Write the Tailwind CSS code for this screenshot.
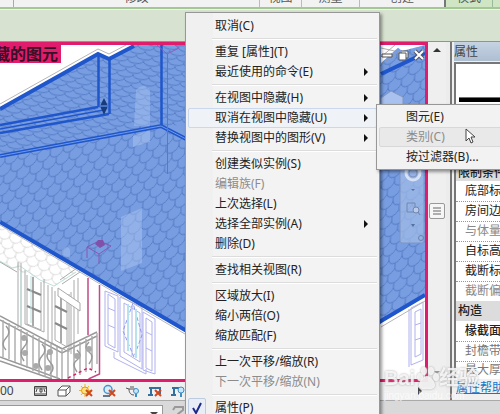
<!DOCTYPE html>
<html lang="zh-CN">
<head>
  <meta charset="UTF-8" />
  <meta name="viewport" content="width=device-width, initial-scale=1.0" />
  <title>修改 - 属性</title>
  <script src="https://cdn.jsdelivr.net/npm/@tailwindcss/browser@4"></script>
</head>
<body class="relative flex h-screen flex-col overflow-hidden bg-[#ececec] font-['Noto_Sans','Noto_Sans_CJK_SC',sans-serif] text-xs text-[#222]">

  <!-- Ribbon -->
  <header class="shrink-0">
    <div class="flex h-[7px] items-end overflow-hidden bg-[#f1f2f1] leading-[14px] text-[#555]">
      <span class="h-4 w-[14px] border-r border-[#aaa]"></span>
      <span class="h-4 flex-1 border-r border-[#bbb] text-center">修改</span>
      <span class="h-4 w-[42px] border-r border-[#bbb] text-center">视图</span>
      <span class="h-4 w-[58px] border-r border-[#bbb] text-center">测量</span>
      <span class="h-4 w-[86px] border-r-2 border-[#777] text-center">创建</span>
      <span class="h-4 w-[47px] border-r border-[#9b9] bg-[#cfe5c4] text-center">模式</span>
      <span class="h-4 w-[7px] bg-[#cfe5c4]"></span>
    </div>
    <div class="h-[35px] border-t-2 border-b border-t-[#a3c795] border-b-[#8d968b] bg-[#d8e2d1]">
      <div class="h-px bg-[#eef3ea]"></div>
    </div>
  </header>

  <div class="flex min-h-0 flex-1">
    <!-- Drawing area -->
    <main class="flex min-w-0 flex-1 flex-col">
      <div class="relative min-h-0 flex-1 overflow-hidden border-t-[3px] border-r-[3px] border-b-[3px] border-[#e01c6c] bg-white">
        <svg class="block h-full w-full" viewBox="0 45 425 334" preserveAspectRatio="xMinYMin slice" fill="none">
          <defs>
            <pattern id="tiles" width="14" height="18" patternUnits="userSpaceOnUse" patternTransform="translate(3 4) rotate(-20) skewX(-24)">
              <path d="M0 0v4c1 6 11 6 14 0V0M-7 9v4c1 6 11 6 14 0V9M7 13c1 6 11 6 14 0V9" stroke="#456cbb" stroke-width=".7" />
            </pattern>
            <pattern id="tilesFlat" width="16" height="10" patternUnits="userSpaceOnUse" patternTransform="rotate(10)">
              <path d="M0 0v1c2 4 13 4 16 0V0M-8 5v1c2 4 13 4 16 0V5M8 6c2 4 13 4 16 0V5" stroke="#456cbb" stroke-width=".7" />
            </pattern>
            <pattern id="tilesPale" width="12" height="16" patternUnits="userSpaceOnUse" patternTransform="rotate(20)">
              <path d="M0 0v3c1 6 11 6 12 0V0M-6 8v3c1 6 11 6 12 0V8M6 11c1 6 11 6 12 0V8" stroke="#ccc" stroke-width=".7" />
            </pattern>
          </defs>

          <!-- lower canopy -->
          <path d="M0 224L65 262 80 270 54 287 38 281 0 262z" fill="url(#tilesPale)" />
          <path d="M0 261L12 268 20 266 40 280 54 286 76 272" stroke="#bfe0da" />

          <!-- balcony windows -->
          <g stroke="#aaa">
            <path d="M0 262l17 10M18 262v66M21 263v63M25 270v54l19 8v-53M27 275v49l14 6v-48M48 285v56M52 287v56l17 9v-58M55 291v49l12 7v-49M71 292v62M74 280v75M78 278v56" />
            <path d="M33 277v49M61 294v49" stroke-width="2" />
            <path d="M27 289l14 6M27 306l14 6M55 306l12 6M55 323l12 6" stroke="#888" stroke-width="2" />
            <path d="M58 288l22 15v8l-22-15zM62 284l18-12M60 280l17-12" fill="#fff" />
          </g>
          <path d="M21 272v54M31 276v47" stroke="#b9e2dc" />

          <!-- balcony railing -->
          <g stroke="#999">
            <path d="M0 316L62 349 97 332M0 320L62 353 97 336M0 357L60 379M0 361l52 18" stroke-width="1.500" />
            <path d="M3 320v37M9 323v36M15 326v36M21 329v36M27 332v36M33 335v36M39 338v36M45 341v36M51 344v34M57 347v31M62 350v29M68 348v31M74 345v34M80 342v33M86 339v33M92 336v33M97 333v31" stroke="#aaa" stroke-width="1.400" />
            <path d="M6 326q6 6 0 12t0 12M24 335q6 6 0 12t0 14M42 344q6 6 0 12t0 14M50 350q-6 6 0 12t0 12M77 350q6 6 0 10t0 12M89 342q-6 6 0 10t0 12" stroke-width="1.500" />
          </g>
          <g fill="#aaa">
            <circle cx="24" cy="338" r="3" /><circle cx="25" cy="353" r="3" /><circle cx="36" cy="366" r="3" />
            <circle cx="50" cy="352" r="3" /><circle cx="48" cy="368" r="3" /><circle cx="77" cy="356" r="3" /><circle cx="89" cy="349" r="3" />
          </g>

          <!-- section box edges -->
          <path d="M88 278v57M99.500 285v89l-11 5" stroke="#c44a86" stroke-width="1.500" />
          <path d="M68 378l20-10 8 4" stroke="#e01c6c" stroke-width="1.500" stroke-dasharray="3 3" />

          <!-- shuttered window -->
          <g stroke="#b0b2ee">
            <path d="M105 291v55l13 6v-56zM108 294v50l7 4v-49zM108 308l7 3M108 325l7 3M120 297v59l22 13v-62zM124 303v49l16 10v-49zM132 306v50M143 312v58l12 4v-55zM146 318v50l6 3v-49zM146 332l6 3M146 348l6 3M114 352v6l32 16v-5" />
            <path d="M133 303l-10 28 11 26 8-22z" stroke="#8e9be8" stroke-dasharray="4 2" />
            <path d="M128 304v47M136 309v49" stroke="#b6e4ee" stroke-width="2" />
            <path d="M411 308v57l12-5v-58zM415 312v45l6-3v-45zM415 325l6-2M415 340l6-2M409 309v58" />
          </g>

          <!-- selected roof -->
          <path d="M0 108L98 53 109 58 134 45H395L402 51 381 66V322L283 379 185 329 0 221z" fill="#789de0" />
          <path d="M402 51l23-6v251l-46 27V63z" fill="#789de0" />
          <path d="M0 156L161 126 190 140 402 51 425 45V296L283 379 185 329 0 221z" fill="url(#tiles)" />
          <path d="M0 108L98 53 109 58 134 45H300V120L161 126 0 156z" fill="url(#tilesFlat)" />
          <path d="M133 136l17-6v12l-17 5zM121 217l21-9v55l-21 8z" fill="#b2caf5" fill-opacity=".45" />
          <path d="M136 90q8-8 14 0v36h-16zM62 250q6-6 8 0v8l-8-3z" fill="#b2caf5" fill-opacity=".4" />
          <path d="M381 45h20l-20 18z" fill="#fff" />
          <path d="M381 48l18 4-18 12M395 45l-14 12" stroke="#999" stroke-width=".8" />
          <path d="M0 104L98 49 109 54 126 45M0 225L185 334M381 327L425 301" stroke="#b5b5b5" />
          <g stroke="#1f56cc">
            <path d="M0 109L98 54 109 59 134 46M0 222L185 330 283 382 381 321 425 295M381 74L425 53M403 144L425 133" stroke-width="4" />
            <path d="M98.500 53v54M109.500 58v56M161.500 45v81M0 125L98 107M0 133L109 114" stroke-width="2.500" />
            <path d="M0 129L104 110" stroke-width="1.500" />
            <path d="M0 156L161 126 190 141" stroke-width="4" />
            <path d="M0 156L161 126 190 141" stroke="#6f9aea" stroke-width="1" />
          </g>
          <path d="M104 98l4 8-4 9-4-9z" fill="#173b7c" />
          <path d="M100 106h8" stroke="#5b86d8" stroke-width="1.500" />
          <path d="M157 45l10 9 12-6-4-3M167.500 54v120" stroke="#8d5fc4" />
          <path d="M87 247l12-6 12 5-12 8zM87 247v11M99 254v10" stroke="#8757b4" />
          <path d="M95 244l3-4h5l2 5-5 3z" fill="#8150ab" />

          <!-- view cube -->
          <path d="M381 98l10-7 12 6v12h-22z" fill="#a9c1ee" stroke="#8296c0" />
          <!-- navigation bar -->
          <rect x="400" y="140" width="24" height="103" rx="2" fill="#a3bce8" fill-opacity=".7" stroke="#7c94c4" />
          <circle cx="413" cy="173" r="7" stroke="#d8e2f4" stroke-width="3" />
          <circle cx="413" cy="173" r="4" stroke="#8095bd" />
          <path d="M407 203h8v9h-8z" stroke="#7286ad" />
          <circle cx="416" cy="210" r="3" fill="#b9caea" stroke="#7286ad" />
          <path d="M418 212l2 3" stroke="#7286ad" />
          <path d="M411 189h4l-2 2zM411 224h4l-2 3z" fill="#54709c" />
          <circle cx="421" cy="238" r="2.500" stroke="#6b82ad" />
        </svg>
        <strong class="absolute top-0 left-0 flex w-[61px] justify-end overflow-hidden bg-[#e01c6c] pr-[3px] text-base leading-[18px] font-bold whitespace-nowrap text-[#3a1026]">藏的图元</strong>
        <div class="absolute top-1 right-0 flex gap-1">
          <button aria-label="最小化"><svg class="size-3" viewBox="0 0 12 12"><path d="M1 5h10v3H1z" fill="#fff" stroke="#555" /></svg></button>
          <button aria-label="还原"><svg class="size-3" viewBox="0 0 12 12"><path d="M4 2h7v7H9M2 4h7v7H2z" fill="#fff" stroke="#555" /></svg></button>
          <button aria-label="关闭"><svg class="size-3" viewBox="0 0 12 12" fill="none"><path d="M2 2l8 8M10 2l-8 8" stroke="#556" stroke-width="4" /><path d="M2 2l8 8M10 2l-8 8" stroke="#fff" stroke-width="2" /></svg></button>
        </div>
      </div>

      <!-- View control bar -->
      <div class="flex h-[18px] shrink-0 items-center gap-2 bg-[#f0f0f0] text-[#444]">
        <span class="w-[25px]">00</span>
        <button aria-label="详细程度"><svg class="h-4 w-[15px]" viewBox="0 0 15 16" fill="none" stroke="#444"><path d="M1.500 3.500h12v9h-12zM1 5h13M1 11h13" /><path d="M4 6l-1 3M7 6h2v3H7zM11 6l1 3" /></svg></button>
        <button aria-label="视觉样式"><svg class="h-4 w-[15px]" viewBox="0 0 15 16" fill="#fff" stroke="#555"><path d="M2 7l4-4h8v6l-4 4H2zM2 7h8v6M10 7l4-4" /></svg></button>
        <button aria-label="日光路径"><svg class="h-4 w-[15px]" viewBox="0 0 15 16" fill="none"><path d="M6 1v13M0 7.500h12M2 3l8 9M10 3l-8 9" stroke="#f0b429" /><circle cx="6" cy="7.500" r="3.500" fill="#ffe27a" stroke="#e29a1c" /><path d="M7 7l6 6M13 7l-6 6" stroke="#d0471f" stroke-width="2" /></svg></button>
        <button aria-label="阴影"><svg class="h-4 w-[15px]" viewBox="0 0 15 16" fill="none"><circle cx="6" cy="6.500" r="4" fill="#d9ecfa" stroke="#4693cd" stroke-width="1.500" /><path d="M1 13h7" stroke="#678" stroke-width="2" /><path d="M7 7l6 6M13 7l-6 6" stroke="#d0471f" stroke-width="2" /></svg></button>
        <button aria-label="渲染"><svg class="h-4 w-[15px]" viewBox="0 0 15 16" fill="none"><path d="M1 5l3 1c0 4 2 6 5 6M4 6h6M5 4h4" stroke="#555" /><circle cx="11" cy="8" r="2.500" fill="#c9e7fa" stroke="#3b8dc6" /><path d="M11 11v3" stroke="#3b8dc6" stroke-width="2" /></svg></button>
        <button aria-label="裁剪视图"><svg class="h-4 w-[15px]" viewBox="0 0 15 16" fill="none"><path d="M3 4v9M1 5h12M12 4v7M0 12h5" stroke="#34709e" stroke-width="2" /><path d="M7 7l6 6M13 7l-6 6" stroke="#d0471f" stroke-width="2" /></svg></button>
        <button aria-label="显示裁剪区域"><svg class="h-4 w-[15px]" viewBox="0 0 15 16" fill="none"><path d="M3 4v9M1 5h7M0 12h5" stroke="#34709e" stroke-width="2" /><circle cx="10" cy="7" r="3" fill="#c9e7fa" stroke="#3b8dc6" /><path d="M10 10v4" stroke="#3b8dc6" stroke-width="2" /></svg></button>
        <button class="mr-1 ml-auto" aria-label="向右滚动"><svg class="size-2" viewBox="0 0 8 8"><path d="M2 0l4 4-4 4z" fill="#444" /></svg></button>
      </div>
    </main>

    <!-- Vertical scrollbar -->
    <div class="flex w-[18px] shrink-0 flex-col items-center justify-between bg-[#efefef]">
      <svg class="mt-1 size-2" viewBox="0 0 8 8"><path d="M4 2l4 4H0z" fill="#333" /></svg>
      <div class="flex size-4 items-center justify-center rounded-xs border border-[#999] bg-[#f6f6f6]">
        <svg class="size-2" viewBox="0 0 8 8"><path d="M0 1h8M0 4h8M0 7h8" stroke="#666" /></svg>
      </div>
      <svg class="mb-6 size-2" viewBox="0 0 8 8"><path d="M1 3h6L4 6z" fill="#999" /></svg>
    </div>

    <!-- Properties -->
    <aside class="ml-1 flex w-[50px] shrink-0 flex-col overflow-hidden border-l-2 border-[#777] bg-[#f0f0f0] pl-[2px] whitespace-nowrap">
      <h2 class="h-[19px] bg-linear-to-b from-[#c5d3e2] to-[#aebfd2] leading-[19px] text-[#444]">属性</h2>
      <div class="mt-px h-[102px] shrink-0 border-t-2 border-l-2 border-[#777] bg-white pt-[33px] pl-[3px]">
        <div class="h-[5px] border-t border-[#2c8d86] bg-black"></div>
      </div>
      <table class="w-[90px] border-collapse border-l-2 border-[#777] bg-white">
        <tbody>
          <tr class="h-[17px] bg-[#dcdcdc]"><th class="p-0 pl-[2px] text-left leading-4 font-medium">限制条件</th></tr>
          <tr class="h-5 border-b border-dotted border-[#999]"><td class="p-0 pl-[9px]">底部标高</td></tr>
          <tr class="h-5 border-b border-dotted border-[#999]"><td class="p-0 pl-[9px]">房间边界</td></tr>
          <tr class="h-5 border-b border-dotted border-[#999] text-[#888]"><td class="p-0 pl-[9px]">与体量相关</td></tr>
          <tr class="h-5 border-b border-dotted border-[#999]"><td class="p-0 pl-[9px]">自标高的</td></tr>
          <tr class="h-5 border-b border-dotted border-[#999]"><td class="p-0 pl-[9px]">截断标高</td></tr>
          <tr class="h-5 text-[#888]"><td class="p-0 pl-[9px]">截断偏移</td></tr>
          <tr class="h-5 bg-[#dcdcdc]"><th class="p-0 pl-[2px] text-left font-medium">构造</th></tr>
          <tr class="h-5 border-b border-dotted border-[#999]"><td class="p-0 pl-[9px] font-medium">椽截面</td></tr>
          <tr class="h-5 border-b border-dotted border-[#999] text-[#777]"><td class="p-0 pl-[9px]">封檐带深度</td></tr>
          <tr class="h-[18px] text-[#777]"><td class="p-0 pl-[9px]">最大厚度</td></tr>
        </tbody>
      </table>
      <a href="#" class="pl-[2px] leading-[18px] text-[#1676c8] underline">属性帮助</a>
    </aside>
  </div>

  <!-- Status bar -->
  <footer class="flex h-[14px] shrink-0 border-t border-[#aaa] bg-[#d9d9d9]">
    <div class="mt-1 flex h-3 w-[163px] items-start justify-end border-t border-r border-[#999] bg-white pr-1">
      <svg class="mt-1 size-2" viewBox="0 0 8 8"><path d="M0 2h8L4 6z" fill="#444" /></svg>
    </div>
    <svg class="mt-1 ml-2 h-3 w-4" viewBox="0 0 16 12" fill="none"><path d="M2 5l2-3h8v3L7 9v3" stroke="#999" stroke-width="2" /></svg>
  </footer>

  <!-- Watermark -->
  <div class="pointer-events-none absolute right-0 bottom-3 w-[116px] font-['Liberation_Sans','Noto_Sans_CJK_SC',sans-serif] font-bold whitespace-nowrap text-white/80">
    <div class="flex items-center text-xl leading-6 drop-shadow-[0_0_1px_#999]">
      <span>Bai</span>
      <svg class="size-6" viewBox="0 0 24 24" fill="currentColor"><ellipse cx="5" cy="11" rx="3" ry="4" /><ellipse cx="9" cy="5" rx="3" ry="4" /><ellipse cx="16" cy="5" rx="3" ry="4" /><ellipse cx="21" cy="11" rx="3" ry="4" /><path d="M12 10c4 0 8 6 8 9s-3 5-8 4c-5 1-8-1-8-4s4-9 8-9z" /></svg>
      <span>经验</span>
    </div>
    <div class="text-[10px] leading-3 font-normal text-white/70">jingyan.baidu.com</div>
  </div>

  <!-- Context menu -->
  <div role="menu" class="absolute top-3 left-[185px] w-[195px] border border-[#979797] bg-linear-to-r from-[#f0f0f0] from-[27px] to-[#f3f3f3] to-[27px] px-[2px] py-[3px] shadow-[2px_2px_3px_#0006]">
    <div class="*:flex *:h-5 *:w-full *:items-center *:rounded-xs *:border *:border-transparent *:pr-2 *:pl-[26px] *:text-left">
      <button role="menuitem">取消(C)</button>
    </div>
    <hr class="my-[2px] ml-6 h-[2px] border-t border-b border-t-[#dcdcdc] border-b-white" />
    <div class="*:flex *:h-5 *:w-full *:items-center *:rounded-xs *:border *:border-transparent *:pr-2 *:pl-[26px] *:text-left">
      <button role="menuitem">重复 [属性](T)</button>
      <button role="menuitem">最近使用的命令(E)<svg class="ml-auto h-2 w-1" viewBox="0 0 4 8"><path d="M0 0l4 4-4 4z" fill="#111" /></svg></button>
    </div>
    <hr class="my-[2px] ml-6 h-[2px] border-t border-b border-t-[#dcdcdc] border-b-white" />
    <div class="*:flex *:h-5 *:w-full *:items-center *:rounded-xs *:border *:pr-2 *:pl-[26px] *:text-left">
      <button role="menuitem" class="border-transparent">在视图中隐藏(H)<svg class="ml-auto h-2 w-1" viewBox="0 0 4 8"><path d="M0 0l4 4-4 4z" fill="#111" /></svg></button>
      <button role="menuitem" aria-expanded="true" class="border-[#c9d8ec] bg-[#eff2f7]">取消在视图中隐藏(U)<svg class="ml-auto h-2 w-1" viewBox="0 0 4 8"><path d="M0 0l4 4-4 4z" fill="#111" /></svg></button>
      <button role="menuitem" class="border-transparent">替换视图中的图形(V)<svg class="ml-auto h-2 w-1" viewBox="0 0 4 8"><path d="M0 0l4 4-4 4z" fill="#111" /></svg></button>
    </div>
    <hr class="my-[2px] ml-6 h-[2px] border-t border-b border-t-[#dcdcdc] border-b-white" />
    <div class="*:flex *:h-5 *:w-full *:items-center *:rounded-xs *:border *:border-transparent *:pr-2 *:pl-[26px] *:text-left">
      <button role="menuitem">创建类似实例(S)</button>
      <button role="menuitem" disabled class="text-[#8c8c8c]">编辑族(F)</button>
      <button role="menuitem">上次选择(L)</button>
      <button role="menuitem">选择全部实例(A)<svg class="ml-auto h-2 w-1" viewBox="0 0 4 8"><path d="M0 0l4 4-4 4z" fill="#111" /></svg></button>
      <button role="menuitem">删除(D)</button>
    </div>
    <hr class="my-[2px] ml-6 h-[2px] border-t border-b border-t-[#dcdcdc] border-b-white" />
    <div class="*:flex *:h-5 *:w-full *:items-center *:rounded-xs *:border *:border-transparent *:pr-2 *:pl-[26px] *:text-left">
      <button role="menuitem">查找相关视图(R)</button>
    </div>
    <hr class="my-[2px] ml-6 h-[2px] border-t border-b border-t-[#dcdcdc] border-b-white" />
    <div class="*:flex *:h-5 *:w-full *:items-center *:rounded-xs *:border *:border-transparent *:pr-2 *:pl-[26px] *:text-left">
      <button role="menuitem">区域放大(I)</button>
      <button role="menuitem">缩小两倍(O)</button>
      <button role="menuitem">缩放匹配(F)</button>
    </div>
    <hr class="my-[2px] ml-6 h-[2px] border-t border-b border-t-[#dcdcdc] border-b-white" />
    <div class="*:flex *:h-5 *:w-full *:items-center *:rounded-xs *:border *:border-transparent *:pr-2 *:pl-[26px] *:text-left">
      <button role="menuitem">上一次平移/缩放(R)</button>
      <button role="menuitem" disabled class="text-[#8c8c8c]">下一次平移/缩放(N)</button>
    </div>
    <hr class="my-[2px] ml-6 h-[2px] border-t border-b border-t-[#dcdcdc] border-b-white" />
    <button role="menuitemcheckbox" aria-checked="true" class="flex h-5 w-full items-center gap-[9px] text-left">
      <span class="flex h-5 w-[18px] items-center justify-center rounded-xs border border-[#bccbe0] bg-[#e9eef6]">
        <svg class="size-3" viewBox="0 0 12 12" fill="none"><path d="M2 6l3 5L10 1" stroke="#1d2a8c" stroke-width="2" /></svg>
      </span>
      属性(P)
    </button>
  </div>

  <!-- Submenu -->
  <div role="menu" class="absolute top-[104px] left-[376px] w-[130px] border border-[#979797] bg-[#f2f2f2] p-[2px] shadow-[2px_2px_3px_#0006]">
    <button role="menuitem" class="flex h-5 w-full items-center pl-[27px]">图元(E)</button>
    <button role="menuitem" disabled class="flex h-5 w-full items-center rounded-xs border border-[#d8d8d8] bg-[#e9e9e9] pl-[26px] text-[#8c8c8c]">类别(C)</button>
    <button role="menuitem" class="flex h-5 w-full items-center pl-[27px]">按过滤器(B)...</button>
  </div>

  <!-- Mouse pointer -->
  <svg class="pointer-events-none absolute top-[128px] left-[465px] h-[17px] w-3" viewBox="0 0 12 17"><path d="M1 1v12l3-3 2 5 2-1-2-5h4z" fill="#fff" stroke="#444" /></svg>
</body>
</html>
